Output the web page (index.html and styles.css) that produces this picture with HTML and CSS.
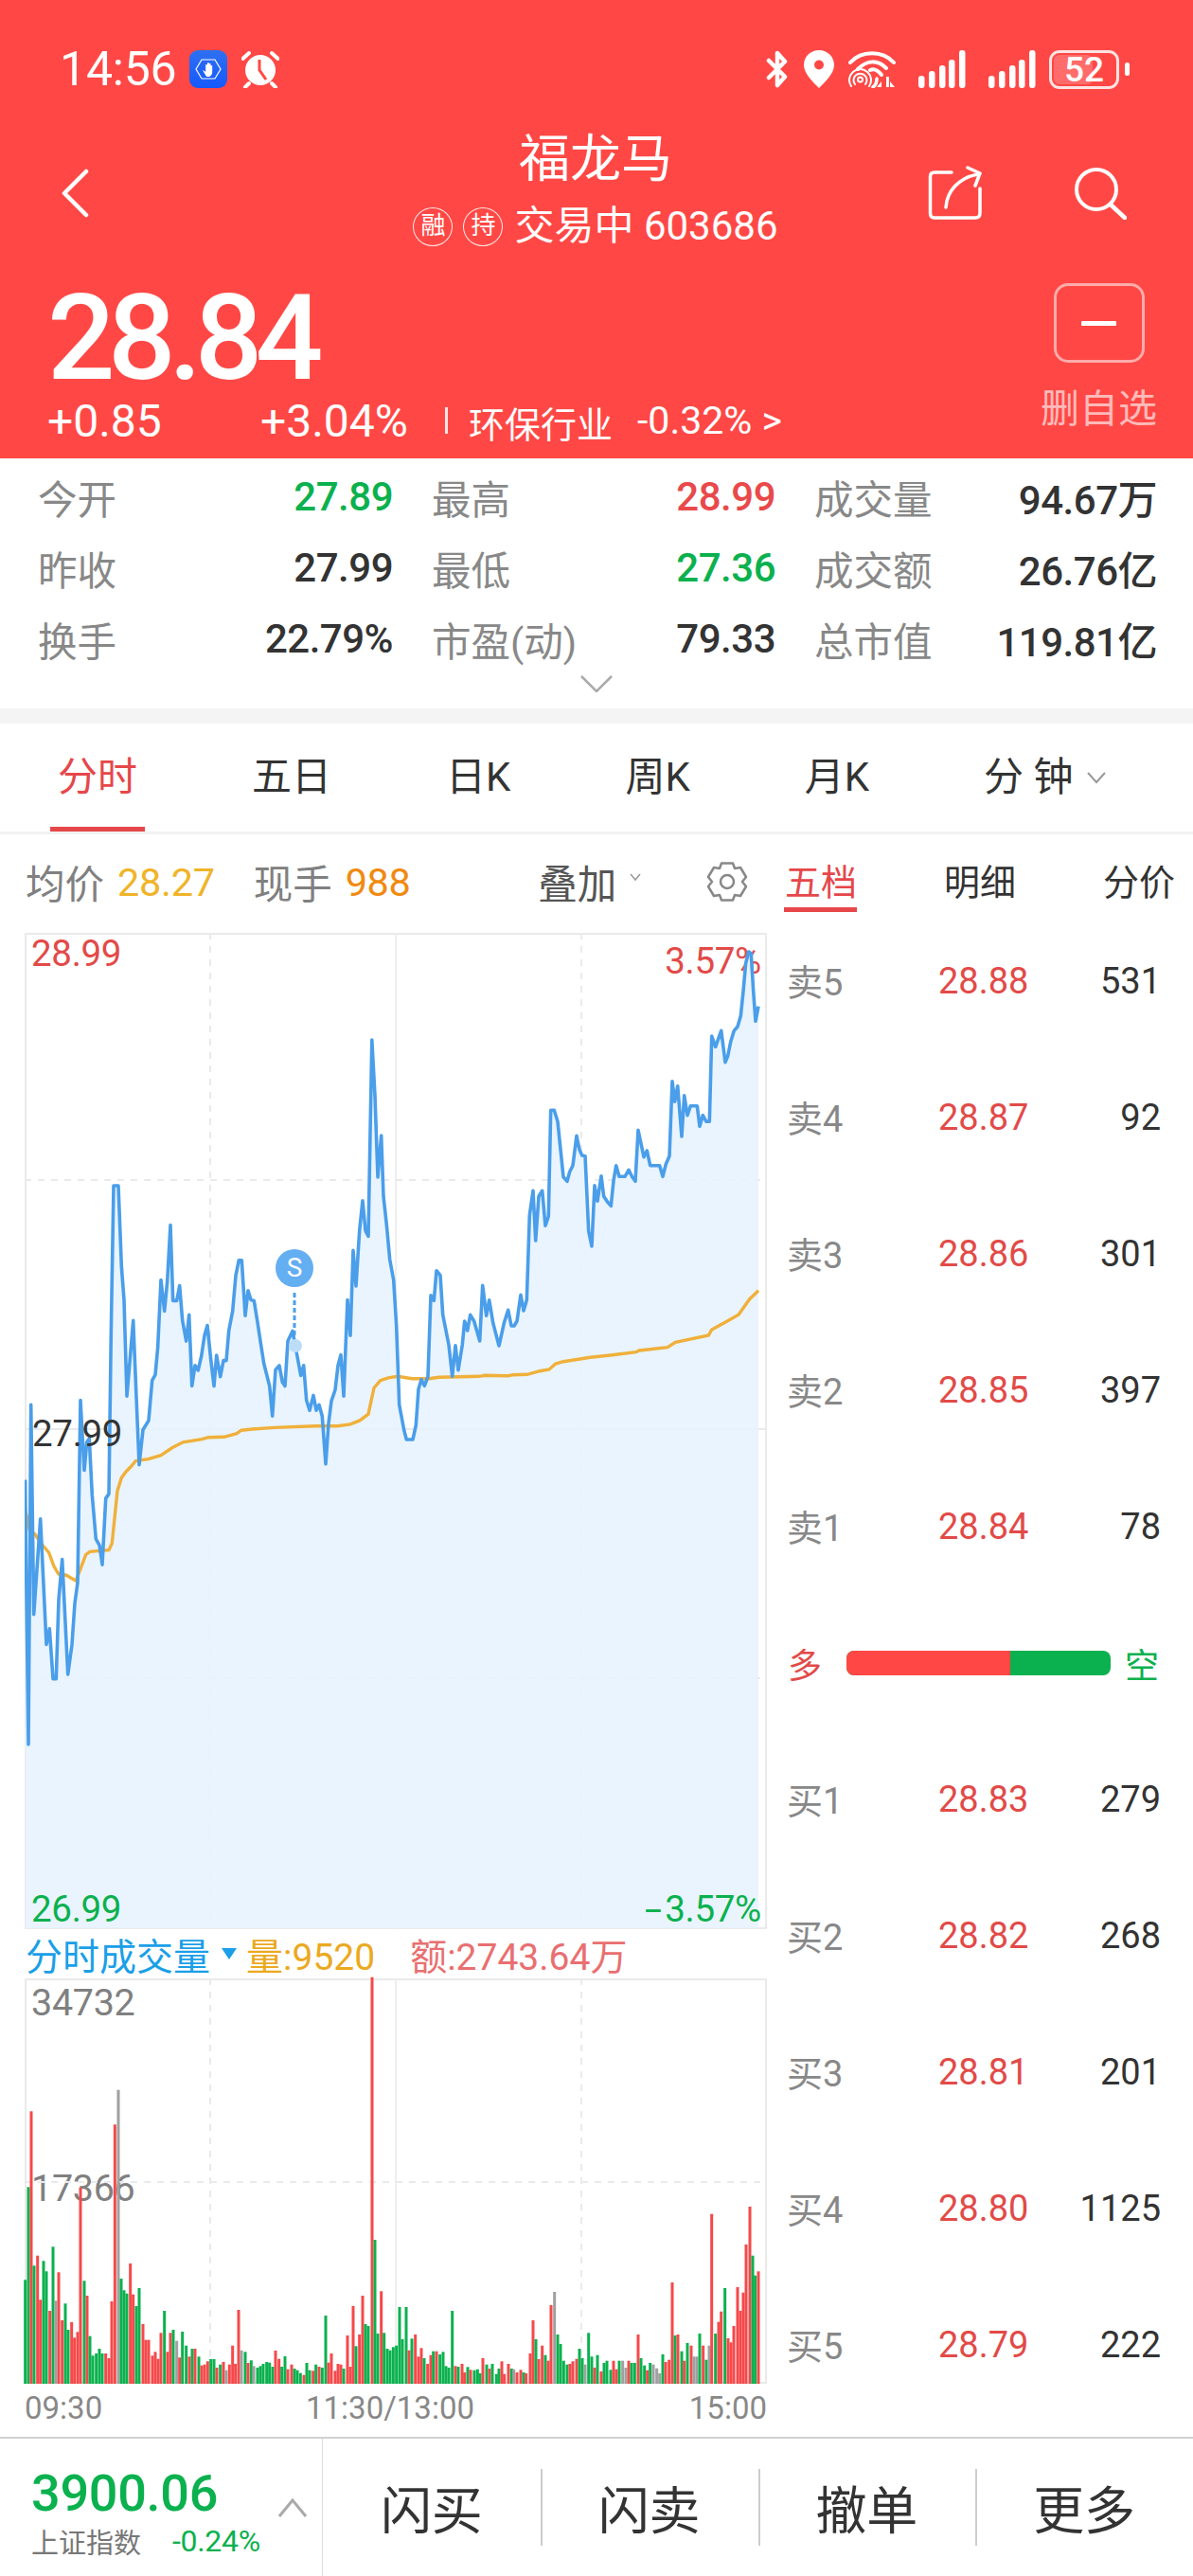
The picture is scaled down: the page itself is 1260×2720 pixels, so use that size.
FILE: index.html
```html
<!DOCTYPE html>
<html lang="zh-CN">
<head>
<meta charset="utf-8">
<title>福龙马</title>
<link rel="stylesheet" href="styles.css">
</head>
<body>
<div class="page">
  <header class="header">
    <div class="status">
      <div class="status-left">
        <span class="clock">14:56</span>
        <svg class="ico-app" viewBox="0 0 40 40"><defs><linearGradient id="ag" x1="0" y1="0" x2="0" y2="1"><stop offset="0" stop-color="#2f70f0"/><stop offset="1" stop-color="#1558ff"/></linearGradient></defs><rect width="40" height="40" rx="9" fill="url(#ag)"/><path d="M7 20 13 10H27L33 20 27 30H13Z" fill="none" stroke="#fff" stroke-width="1.2"/><path d="M14 21l2 1 1.200 1V15.500a1 1 0 0 1 1.800 0V13.500a1 1 0 0 1 1.800 0V14.500a1 1 0 0 1 1.800 0V16.500a1 1 0 0 1 1.600 0V23c0 3-2 5-4.500 5S17 26 16 24.500Z" fill="#fff"/></svg>
        <svg class="ico-alarm" viewBox="0 0 40 40"><circle cx="20" cy="21" r="16" fill="#fff"/><path d="M19 10V21L26 31" fill="none" stroke="#ff4845" stroke-width="3"/><path d="M1.500 9 8 3M38.500 9 32 3M8 35 4 39M32 35 36 39" stroke="#fff" stroke-width="4" stroke-linecap="round"/></svg>
      </div>
      <div class="status-right">
        <svg class="ico-bt" viewBox="0 0 24 40"><path d="M3 11 20 28 12 37V3L20 12 3 29" fill="none" stroke="#fff" stroke-width="4.500" stroke-linejoin="round" stroke-linecap="round"/></svg>
        <svg class="ico-pin" viewBox="0 0 32 40"><path fill-rule="evenodd" d="M16 0C7 0 0 7 0 15.500 0 25 10 34 16 40 22 34 32 25 32 15.500 32 7 25 0 16 0ZM16 10.500a5 5 0 1 1 0 10 5 5 0 0 1 0-10Z" fill="#fff"/></svg>
        <svg class="ico-wifi" viewBox="0 0 50 40"><g fill="none" stroke="#fff" stroke-linecap="round"><path d="M2 13C14 0 36 0 48 13" stroke-width="4"/><path d="M10 20C20 10 31 10 40 19" stroke-width="4"/><path d="M23 21C27 19 31 21 35 26" stroke-width="4"/><path d="M3 38A11.500 11.500 0 1 1 22 38" stroke-width="2"/><path d="M7 36A7 7 0 1 1 18 36" stroke-width="2"/><circle cx="12.500" cy="31" r="2.500" stroke-width="2"/><path d="M26 39C29 37 30 34 30 30" stroke-width="3.500"/></g><path d="M35 33v6h-5ZM40 28v11h3V28ZM44 33v6h5Z" fill="#fff"/></svg>
        <svg class="ico-signal" viewBox="0 0 50 40"><g fill="#fff"><rect x="0" y="27" width="6.500" height="13" rx="3"/><rect x="11" y="22" width="6.500" height="18" rx="3"/><rect x="22" y="16" width="6.500" height="24" rx="3"/><rect x="32" y="10" width="6.500" height="30" rx="3"/><rect x="43" y="0" width="6.500" height="40" rx="3"/></g></svg>
        <svg class="ico-signal" viewBox="0 0 50 40"><g fill="#fff"><rect x="0" y="27" width="6.500" height="13" rx="3"/><rect x="11" y="22" width="6.500" height="18" rx="3"/><rect x="22" y="16" width="6.500" height="24" rx="3"/><rect x="32" y="10" width="6.500" height="30" rx="3"/><rect x="43" y="0" width="6.500" height="40" rx="3"/></g></svg>
        <span class="battery"><span class="battery-fill"></span><span class="battery-num">52</span></span>
        <span class="battery-nub"></span>
      </div>
    </div>
    <div class="nav">
      <svg class="back" viewBox="0 0 30 52"><path d="M27 3 4 26 27 49" fill="none" stroke="#fff" stroke-width="4.500" stroke-linecap="round" stroke-linejoin="round"/></svg>
      <div class="nav-center">
        <div class="stock-name">福龙马</div>
        <div class="stock-sub">
          <span class="pill">融</span><span class="pill">持</span><span class="sub-text">交易中 603686</span>
        </div>
      </div>
      <div class="nav-actions">
        <svg class="share" viewBox="0 0 58 58"><path d="M25 7H7Q2.500 7 2.500 11.500V50Q2.500 55 7 55H50Q55 55 55 50V24" fill="none" stroke="#fff" stroke-width="3.500" stroke-linecap="round"/><path d="M19 44C20 28 31 13 53 9M42 2 55 8 50 21" fill="none" stroke="#fff" stroke-width="3.500" stroke-linecap="round" stroke-linejoin="round"/></svg>
        <svg class="search" viewBox="0 0 56 56"><circle cx="24" cy="24" r="21" fill="none" stroke="#fff" stroke-width="4"/><path d="M39 40 54 54" stroke="#fff" stroke-width="4.500" stroke-linecap="round"/></svg>
      </div>
    </div>
    <div class="quote">
      <div class="quote-main">
        <div class="price">28.84</div>
        <div class="quote-sub">
          <span class="chg">+0.85</span>
          <span class="pct">+3.04%</span>
          <span class="vbar"></span>
          <span class="sector">环保行业</span>
          <span class="sector-chg">-0.32% &gt;</span>
        </div>
      </div>
      <div class="watch">
        <span class="watch-box"><span class="watch-minus"></span></span>
        <span class="watch-label">删自选</span>
      </div>
    </div>
  </header>

  <section class="stats">
    <div class="stats-grid">
      <div class="stat"><span class="lab">今开</span><span class="val down">27.89</span></div>
      <div class="stat"><span class="lab">最高</span><span class="val up">28.99</span></div>
      <div class="stat"><span class="lab">成交量</span><span class="val">94.67万</span></div>
      <div class="stat"><span class="lab">昨收</span><span class="val">27.99</span></div>
      <div class="stat"><span class="lab">最低</span><span class="val down">27.36</span></div>
      <div class="stat"><span class="lab">成交额</span><span class="val">26.76亿</span></div>
      <div class="stat"><span class="lab">换手</span><span class="val">22.79%</span></div>
      <div class="stat"><span class="lab">市盈(动)</span><span class="val">79.33</span></div>
      <div class="stat"><span class="lab">总市值</span><span class="val">119.81亿</span></div>
    </div>
    <svg class="more" viewBox="0 0 34 18"><path d="M1 1 17 17 33 1" fill="none" stroke="#aaa" stroke-width="2.500"/></svg>
  </section>

  <nav class="tabs">
    <span class="tab active">分时</span>
    <span class="tab">五日</span>
    <span class="tab">日K</span>
    <span class="tab">周K</span>
    <span class="tab">月K</span>
    <span class="tab">分 钟<svg class="caret" viewBox="0 0 20 14"><path d="M1 2 10 12 19 2" fill="none" stroke="#999" stroke-width="2"/></svg></span>
  </nav>

  <main class="main">
    <div class="left">
      <div class="info">
        <span class="info-lab">均价</span><span class="info-avg">28.27</span>
        <span class="info-lab info-hand">现手</span><span class="info-now">988</span>
        <span class="overlay">叠加<svg class="mini" viewBox="0 0 12 10"><path d="M1 2 6 8 11 2" fill="none" stroke="#999" stroke-width="1.500"/></svg></span>
        <svg class="gear" viewBox="0 0 46 44"><path d="M17 2.500H29L31 8 37 7 43 17 39 22 43 27 37 37 31 36 29 41.500H17L15 36 9 37 3 27 7 22 3 17 9 7 15 8Z" fill="none" stroke="#888" stroke-width="2.500" stroke-linejoin="round"/><circle cx="23" cy="22" r="7" fill="none" stroke="#888" stroke-width="2.500"/></svg>
      </div>
      <div class="chart chart-price">
        <span class="clab clab-high">28.99</span>
        <span class="clab clab-high-pct">3.57%</span>
        <span class="clab clab-pre">27.99</span>
        <span class="clab clab-low">26.99</span>
        <span class="clab clab-low-pct"><span class="dash">-</span>3.57%</span>
        <svg id="priceSvg" class="plot" viewBox="26 985 784 1052"></svg>
        <span class="s-mark">S</span>
      </div>
      <div class="vol-head">
        <span class="vol-title">分时成交量</span><span class="vol-tri"></span>
        <span class="vol-q">量:9520</span><span class="vol-a">额:2743.64万</span>
      </div>
      <div class="chart chart-vol">
        <span class="clab vlab-top">34732</span>
        <span class="clab vlab-mid">17366</span>
        <svg id="volSvg" class="plot plot-vol" viewBox="26 2089 784 428"></svg>
      </div>
      <div class="axis"><span>09:30</span><span class="axis-mid">11:30/13:00</span><span>15:00</span></div>
    </div>
    <aside class="book">
      <div class="book-tabs"><span class="btab active">五档</span><span class="btab">明细</span><span class="btab">分价</span></div>
      <div class="row"><span class="r-lab">卖5</span><span class="r-price">28.88</span><span class="r-qty">531</span></div>
      <div class="row"><span class="r-lab">卖4</span><span class="r-price">28.87</span><span class="r-qty">92</span></div>
      <div class="row"><span class="r-lab">卖3</span><span class="r-price">28.86</span><span class="r-qty">301</span></div>
      <div class="row"><span class="r-lab">卖2</span><span class="r-price">28.85</span><span class="r-qty">397</span></div>
      <div class="row"><span class="r-lab">卖1</span><span class="r-price">28.84</span><span class="r-qty">78</span></div>
      <div class="balance">
        <span class="bal-bull">多</span>
        <span class="bal-bar"><span class="bal-red"></span></span>
        <span class="bal-bear">空</span>
      </div>
      <div class="row"><span class="r-lab">买1</span><span class="r-price">28.83</span><span class="r-qty">279</span></div>
      <div class="row"><span class="r-lab">买2</span><span class="r-price">28.82</span><span class="r-qty">268</span></div>
      <div class="row"><span class="r-lab">买3</span><span class="r-price">28.81</span><span class="r-qty">201</span></div>
      <div class="row"><span class="r-lab">买4</span><span class="r-price">28.80</span><span class="r-qty">1125</span></div>
      <div class="row"><span class="r-lab">买5</span><span class="r-price">28.79</span><span class="r-qty">222</span></div>
    </aside>
  </main>

  <footer class="footer">
    <div class="index">
      <div class="index-val">3900.06</div>
      <div class="index-sub"><span class="index-name">上证指数</span><span class="index-chg">-0.24%</span></div>
      <svg class="index-up" viewBox="0 0 30 20"><path d="M1 19 15 2 29 19" fill="none" stroke="#aaa" stroke-width="3"/></svg>
    </div>
    <div class="act"><span>闪买</span></div>
    <div class="act act-sep"><span>闪卖</span></div>
    <div class="act act-sep"><span>撤单</span></div>
    <div class="act act-sep"><span>更多</span></div>
  </footer>
</div>
<script src="chart.js"></script>
</body>
</html>
```
FILE: styles.css
```css
* { box-sizing: border-box; }
html, body { margin: 0; padding: 0; background: #fff; }
body { font-family: Roboto, "Noto Sans CJK SC", sans-serif; color: #333; }
.page { width: 1260px; height: 2720px; overflow: hidden; }

/* header */
.header { height: 484px; background: #ff4845; color: #fff; padding-top: 51px; }
.status { height: 44px; display: flex; justify-content: space-between; align-items: center; padding: 0 67px 0 63px; }
.status-left, .status-right { display: flex; align-items: center; }
.clock { font-size: 50px; line-height: 44px; width: 137px; letter-spacing: -.2px; }
.ico-app { width: 40px; height: 40px; }
.ico-alarm { width: 40px; height: 40px; margin-left: 15px; }
.ico-bt { width: 24px; height: 40px; }
.ico-pin { width: 32px; height: 40px; margin-left: 16px; }
.ico-wifi { width: 50px; height: 40px; margin-left: 15px; }
.ico-signal { width: 50px; height: 40px; margin-left: 24px; }
.battery { position: relative; width: 74px; height: 41px; margin-left: 14px; border: 3px solid rgba(255,255,255,.85); border-radius: 11px; overflow: hidden; display: flex; align-items: center; justify-content: center; }
.battery-fill { position: absolute; left: 2px; top: 2px; bottom: 2px; width: 60%; background: rgba(255,255,255,.2); border-radius: 6px; }
.battery-num { position: relative; font-size: 37px; line-height: 35px; font-weight: 500; color: #fff; }
.battery-nub { width: 5px; height: 14px; margin-left: 6px; background: #fff; border-radius: 3px; }

.nav { height: 128px; margin-top: 39px; display: grid; grid-template-columns: 1fr auto 1fr; align-items: center; padding: 0 70px 0 64px; }
.back { width: 30px; height: 52px; margin-top: 8px; }
.nav-center { display: flex; flex-direction: column; align-items: center; margin-left: 4px; align-self: start; margin-top: 3px; }
.stock-name { font-size: 54px; line-height: 64px; }
.stock-sub { display: flex; align-items: center; height: 52px; margin-top: 12px; }
.pill { width: 42px; height: 41px; border: 1.500px solid rgba(255,255,255,.9); border-radius: 50%; font-size: 26px; line-height: 37px; text-align: center; margin-right: 11px; }
.sub-text { font-size: 42px; line-height: 52px; margin-left: 1px; }
.nav-actions { display: flex; justify-content: flex-end; align-items: center; gap: 96px; margin-top: 8px; }
.share { width: 58px; height: 58px; }
.search { width: 56px; height: 56px; }

.quote { display: flex; justify-content: space-between; padding: 37px 38px 0 50px; }
.quote-main { display: flex; flex-direction: column; }
.price { font-size: 126px; line-height: 100px; font-weight: 500; letter-spacing: -7.500px; margin-top: 8px; }
.quote-sub { display: flex; align-items: center; height: 44px; margin-top: 15px; }
.chg { width: 225px; font-size: 48px; }
.pct { width: 195px; font-size: 48px; }
.vbar { width: 3px; height: 28px; background: rgba(255,255,255,.85); }
.sector { font-size: 38px; margin-left: 22px; margin-top: 2px; }
.sector-chg { font-size: 41px; margin-left: 26px; }
.watch { display: flex; flex-direction: column; align-items: center; }
.watch-box { width: 96px; height: 84px; border: 3px solid rgba(255,255,255,.55); border-radius: 15px; display: flex; align-items: center; justify-content: center; }
.watch-minus { width: 37px; height: 5px; background: #fff; border-radius: 1px; }
.watch-label { font-size: 41px; line-height: 48px; margin-top: 25px; width: 123px; color: rgba(255,255,255,.65); }

/* stats */
.stats { height: 280px; padding-top: 3px; border-bottom: 16px solid #f4f4f4; display: flex; flex-direction: column; align-items: center; }
.stats-grid { width: 100%; padding: 0 38px 0 40px; display: grid; grid-template-columns: 375px 363px 362px; column-gap: 41px; grid-auto-rows: 75px; }
.stat { display: flex; justify-content: space-between; align-items: center; }
.lab { font-size: 41.500px; color: #888; }
.val { font-size: 42px; font-weight: 500; color: #333; letter-spacing: -.5px; }
.up { color: #e9494a; }
.down { color: #0bb14e; }
.more { width: 34px; height: 18px; margin-top: 1px; }

/* tabs */
.tabs { height: 117px; border-bottom: 3px solid #f2f2f2; display: flex; gap: 121px; padding-left: 61px; align-items: stretch; }
.tab { position: relative; font-size: 42px; line-height: 116px; display: flex; align-items: center; color: #333; }
.tab.active { color: #e6474a; }
.tab.active::after { content: ""; position: absolute; left: -8px; right: -8px; bottom: 0; height: 5px; background: #e6474a; }
.caret { width: 20px; height: 14px; margin-left: 14px; }

/* main */
.main { display: flex; height: 1692px; }
.left { width: 820px; }
.info { height: 104px; padding: 0 0 4px 27px; display: flex; align-items: center; font-size: 41.500px; color: #888; }
.info-lab { color: #808080; }
.info-avg { color: #f0b429; margin-left: 14px; letter-spacing: -.3px; }
.info-hand { margin-left: 41px; }
.info-now { color: #f08a10; margin-left: 14px; letter-spacing: -.5px; }
.overlay { margin-left: 135px; color: #555; display: flex; align-items: center; }
.mini { width: 12px; height: 10px; margin-left: 14px; margin-top: -10px; }
.gear { width: 46px; height: 44px; margin-left: 68px; }

.chart { position: relative; margin-left: 26px; width: 784px; }
.chart-price { height: 1052px; }
.chart-vol { height: 428px; }
.plot { position: relative; display: block; width: 100%; height: 100%; }
.plot-vol { overflow: visible; }
.clab { position: absolute; font-size: 38.500px; line-height: 40px; letter-spacing: -.3px; }
.clab-high { left: 7px; top: 2px; color: #e24a48; }
.clab-high-pct { right: 6px; top: 10px; color: #e24a48; }
.clab-pre { left: 8px; top: 509px; color: #333; z-index: 2; }
.clab-low { left: 7px; top: 1011px; color: #0bb14e; z-index: 2; }
.clab-low-pct { right: 6px; top: 1011px; color: #0bb14e; z-index: 2; }
.dash { display: inline-block; width: 21px; transform: scaleX(1.7); transform-origin: left center; }
.vlab-top { left: 7px; top: 6px; color: #808080; font-size: 39.500px; }
.vlab-mid { left: 7px; top: 202px; color: #808080; font-size: 39.500px; }
.s-mark { position: absolute; left: 265px; top: 334px; width: 40px; height: 40px; border-radius: 50%; background: #64aef2; color: #fff; font-size: 28px; line-height: 40px; text-align: center; }

.vol-head { height: 52px; padding-left: 27px; display: flex; align-items: center; font-size: 39px; }
.vol-title { color: #1a9fe8; }
.vol-tri { width: 0; height: 0; margin-left: 12px; margin-right: 10px; border-left: 8px solid transparent; border-right: 8px solid transparent; border-top: 12px solid #1a9fe8; }
.vol-q { color: #eba91f; }
.vol-a { color: #e96f70; margin-left: 37px; }
.axis { width: 784px; margin-left: 26px; display: flex; justify-content: space-between; font-size: 33px; line-height: 40px; color: #888; padding-top: 6px; }
.axis-mid { margin-right: 12px; }

/* book */
.book { width: 440px; }
.book-tabs { height: 83px; display: grid; grid-template-columns: 168px 168px 1fr; padding-left: 9px; font-size: 38px; }
.btab { height: 82px; padding-top: 29px; line-height: 44px; color: #333; }
.btab.active { color: #e6474a; position: relative; }
.btab.active::after { content: ""; position: absolute; left: -1px; width: 77px; top: 77px; height: 5px; background: #e6474a; }
.row { height: 144px; display: grid; grid-template-columns: 160px 1fr auto; align-items: center; padding: 0 34px 0 11px; }
.r-lab { font-size: 38px; color: #888; margin-top: -4px; }
.r-price { font-size: 38px; color: #e24a48; }
.r-qty { font-size: 38px; color: #333; }
.balance { height: 144px; display: flex; align-items: center; padding: 0 36px 0 12px; }
.bal-bull { font-size: 36px; color: #e24a48; width: 62px; }
.bal-bear { font-size: 36px; color: #0bb14e; margin-left: 15px; }
.bal-bar { width: 281px; height: 26px; border-radius: 8px; background: #0bb14e; overflow: hidden; display: block; }
.bal-red { display: block; width: 62%; height: 100%; background: #ff4845; }

/* footer */
.footer { height: 147px; border-top: 2px solid #d0d0d0; display: flex; }
.index { position: relative; width: 341px; border-right: 1px solid #ddd; padding: 26px 0 0 33px; }
.index-val { font-size: 54px; line-height: 64px; font-weight: 500; color: #0bb14e; letter-spacing: -.3px; }
.index-sub { display: flex; align-items: center; margin-top: -3px; }
.index-name { font-size: 29px; color: #777; width: 149px; }
.index-chg { font-size: 32px; color: #0bb14e; letter-spacing: -.3px; }
.index-up { position: absolute; left: 294px; top: 63px; width: 30px; height: 20px; }
.act { flex: 1; display: flex; align-items: center; justify-content: center; font-size: 54px; color: #333; position: relative; }
.act-sep::before { content: ""; position: absolute; left: 0; top: 32px; height: 81px; width: 2px; background: #ccc; }
```
FILE: chart.js
```js
var NS = 'http://www.w3.org/2000/svg';
function el(parent, name, attrs) {
  var n = document.createElementNS(NS, name);
  for (var k in attrs) n.setAttribute(k, attrs[k]);
  parent.appendChild(n);
  return n;
}
function pts(raw, fx, fy) {
  var out = [];
  for (var i = 0; i < raw.length; i += 2) out.push([fx(raw[i]), fy(raw[i + 1])]);
  return out;
}
var fxA = function (x) { return x / 3; };
var fyA = function (y) { return 1250 + y / 2.529; };
var fxB = function (x) { return 400 + x / 3; };
var fyB = function (y) { return 1000 + y / 3; };

var priceA = [80,790,82,960,90,1497,98,590,107,1150,128,895,147,1230,157,1188,168,1322,178,1322,186,1110,197,1003,215,1310,228,1230,237,1120,246,1065,255,578,267,765,275,690,283,680,292,830,304,948,315,965,324,1017,335,840,345,828,352,400,360,5,375,5,385,220,393,310,402,567,422,365,432,570,441,750,453,657,471,632,482,525,492,510,500,435,510,257,521,340,530,260,540,110,548,312,560,312,569,272,578,365,590,420,599,350,608,540,618,485,628,498,638,460,648,405,657,378,668,470,678,540,686,458,698,515,708,472,717,472,725,392,737,340,747,245,757,204,766,204,777,352,786,285,795,310,805,312,816,370,826,425,836,480,854,540,863,620,873,497,885,485,895,530,903,540,912,420,927,393,935,430,953,512,962,485,971,578,981,605,993,565,1002,605,1011,590,1021,620,1032,748,1041,640,1050,580,1062,550,1071,485,1080,457,1089,567,1101,310,1110,405,1119,178,1128,273,1139,125,1149,45,1158,125,1167,140];
var priceMid = [[392.8,1098],[396,1157],[399,1243],[402.7,1199]];
var priceB = [15,790,25,880,35,990,47,1055,56,1200,65,1450,80,1530,88,1560,108,1560,118,1515,126,1400,135,1370,145,1390,156,1360,165,1103,175,1120,183,1025,195,1040,203,1165,222,1260,233,1360,243,1262,252,1340,265,1260,272,1185,281,1215,290,1165,302,1185,320,1248,329,1072,341,1168,350,1118,362,1190,381,1263,398,1187,410,1150,420,1200,429,1200,438,1185,450,1102,459,1152,469,1118,478,850,489,772,497,930,507,790,518,772,528,883,538,853,545,517,556,517,567,553,585,728,597,742,605,712,615,692,627,598,636,642,644,660,654,662,665,900,675,948,684,755,693,805,705,725,713,790,725,808,736,820,744,740,752,692,762,727,780,727,792,706,803,728,813,742,822,580,840,665,850,645,860,692,890,692,900,727,910,688,921,662,930,425,938,490,947,440,960,600,968,470,978,533,988,503,1009,503,1017,568,1027,533,1038,553,1048,553,1055,282,1067,316,1085,265,1098,365,1106,345,1115,300,1126,265,1137,252,1147,218,1155,140,1163,50,1172,15,1180,20,1187,140,1194,235,1203,188];
var avgA = [80,870,95,930,110,935,130,960,155,985,170,1020,185,1042,210,1045,240,1060,250,1040,272,990,285,982,345,978,355,960,372,820,385,785,400,768,415,755,430,740,470,735,510,725,545,705,580,690,640,682,660,677,710,676,750,667,765,658,800,655,870,651,1000,647,1070,647,1110,642,1140,632,1167,615,1185,545,1205,525,1230,518];
var avgB = [60,1360,105,1367,160,1367,190,1363,320,1360,335,1357,410,1358,425,1355,470,1354,510,1343,540,1338,560,1320,585,1313,670,1300,740,1292,815,1283,825,1278,915,1268,940,1252,1045,1230,1055,1212,1095,1190,1140,1165,1175,1115,1203,1088];

var price = pts(priceA, fxA, fyA).concat(priceMid, pts(priceB, fxB, fyB));
var avg = pts(avgA, fxA, fyA).concat(pts(avgB, fxB, fyB));
function str(list) { return list.map(function (p) { return p[0].toFixed(1) + ',' + p[1].toFixed(1); }).join(' '); }

var GRID = '#eaeaea';
function gridFor(svg, top, bottom, hLines) {
  el(svg, 'rect', { x: 27, y: top + 1, width: 782, height: bottom - top - 2, fill: 'none', stroke: GRID, 'stroke-width': 2 });
  [222, 614].forEach(function (x) {
    el(svg, 'line', { x1: x, x2: x, y1: top, y2: bottom, stroke: GRID, 'stroke-width': 2, 'stroke-dasharray': '7 7' });
  });
  el(svg, 'line', { x1: 418, x2: 418, y1: top, y2: bottom, stroke: '#eeeeee', 'stroke-width': 2 });
  hLines.forEach(function (l) {
    el(svg, 'line', { x1: 26, x2: 810, y1: l[0], y2: l[0], stroke: GRID, 'stroke-width': 2, 'stroke-dasharray': l[1] ? '7 7' : 'none' });
  });
}

var ps = document.getElementById('priceSvg');
gridFor(ps, 985, 2037, [[1246, true], [1509, false], [1772, true]]);
el(ps, 'polygon', { points: '27,2036 ' + str(price) + ' 801,2036', fill: '#e7f3fe', 'fill-opacity': 0.9 });
el(ps, 'polyline', { points: str(avg), fill: 'none', stroke: '#f0b03a', 'stroke-width': 3.4 });
el(ps, 'polyline', { points: str(price), fill: 'none', stroke: '#4a9eea', 'stroke-width': 3.6, 'stroke-linejoin': 'round' });
el(ps, 'line', { x1: 311, x2: 311, y1: 1365, y2: 1412, stroke: '#4a9eea', 'stroke-width': 3, 'stroke-dasharray': '5 3' });
el(ps, 'circle', { cx: 312, cy: 1421, r: 7, fill: '#bddcf8' });

var volA = [80,'g',622,90,'g',328,99,'r',88,108,'g',577,119,'r',545,128,'r',685,138,'g',562,147,'g',595,158,'r',720,168,'g',517,177,'a',688,186,'r',598,197,'r',750,207,'g',697,216,'g',780,227,'r',756,236,'r',805,246,'r',787,255,'r',330,267,'g',625,276,'r',672,285,'g',800,294,'g',862,305,'g',855,315,'g',840,324,'g',855,335,'r',855,345,'r',870,354,'r',690,364,'r',130,375,'a',20,384,'g',618,393,'g',655,402,'g',665,413,'r',570,422,'r',668,432,'g',705,441,'g',648,453,'r',762,462,'r',812,471,'r',812,483,'r',862,492,'r',850,501,'r',872,510,'r',790,521,'g',720,531,'r',850,540,'r',790,549,'g',780,560,'a',815,569,'r',868,578,'g',786,590,'g',830,600,'r',865,609,'g',840,618,'r',840,630,'g',865,639,'r',893,648,'r',890,658,'r',880,668,'g',873,678,'g',873,687,'r',900,698,'g',890,708,'r',882,717,'a',908,727,'r',890,737,'r',830,746,'r',888,756,'r',717,765,'a',845,777,'g',850,786,'r',885,796,'g',877,804,'a',895,816,'g',900,825,'g',895,834,'g',888,845,'g',882,854,'g',884,864,'g',897,873,'r',846,884,'r',872,893,'g',897,903,'g',864,912,'r',905,924,'r',890,933,'g',903,942,'g',908,952,'g',917,963,'r',923,972,'g',885,981,'g',908,992,'r',910,1001,'g',890,1011,'r',897,1021,'g',900,1032,'g',735,1041,'r',884,1050,'r',855,1062,'r',910,1071,'r',888,1080,'r',890,1089,'g',903,1101,'r',798,1110,'r',897,1119,'r',705,1128,'g',832,1139,'r',795,1149,'r',672,1158,'g',762,1167,'g',768,1179,'r',-337,1188,'g',495,1197,'g',792];
var volB = [8,'r',658,17,'g',790,27,'g',840,36,'g',845,46,'g',835,56,'g',830,66,'g',708,75,'g',810,87,'g',708,96,'r',845,105,'g',808,116,'r',795,126,'r',865,135,'r',838,144,'g',870,155,'r',888,165,'r',860,173,'g',848,183,'r',848,194,'g',858,204,'g',850,213,'g',895,222,'g',900,233,'g',720,243,'r',895,252,'g',897,264,'r',888,272,'r',915,282,'g',898,291,'r',907,303,'g',908,313,'g',905,321,'g',918,330,'r',870,342,'g',890,351,'r',903,360,'g',888,373,'g',920,381,'g',903,390,'r',880,398,'r',920,411,'r',888,421,'g',903,428,'a',905,438,'r',915,450,'r',907,459,'g',915,467,'r',918,480,'r',855,489,'r',750,498,'g',810,507,'r',873,518,'r',830,528,'g',860,537,'r',878,546,'r',702,557,'a',660,567,'g',795,576,'g',825,586,'g',878,597,'g',890,606,'r',888,615,'r',880,627,'r',872,636,'g',840,645,'g',870,654,'a',890,665,'g',790,675,'g',865,684,'r',900,693,'g',860,705,'r',912,714,'g',885,723,'g',878,735,'g',907,744,'r',878,753,'r',905,762,'g',878,773,'a',878,783,'a',900,792,'r',878,801,'g',885,811,'g',885,822,'r',795,831,'g',870,842,'g',893,851,'r',908,860,'g',885,870,'a',890,881,'a',902,890,'a',918,900,'g',858,909,'r',882,920,'r',875,930,'r',630,939,'g',798,948,'r',795,960,'g',848,968,'r',878,978,'g',822,990,'r',830,999,'a',865,1008,'a',865,1017,'g',792,1028,'r',830,1038,'g',875,1047,'a',830,1055,'r',413,1067,'g',792,1077,'r',755,1085,'r',722,1097,'g',648,1107,'r',807,1116,'r',820,1125,'r',768,1137,'r',645,1146,'r',720,1155,'r',662,1164,'r',510,1176,'r',390,1185,'g',545,1193,'g',608,1203,'r',595];
var COLORS = { r: '#f5494a', g: '#0bb14e', a: '#a0a0a0' };

var vs = document.getElementById('volSvg');
gridFor(vs, 2089, 2517, [[2304, true]]);
function bars(list, fx) {
  for (var i = 0; i < list.length; i += 3) {
    var top = 2200 + list[i + 2] / 3;
    el(vs, 'rect', { x: (fx(list[i]) - 1.5).toFixed(2), y: top.toFixed(1), width: 3, height: (2517 - top).toFixed(1), fill: COLORS[list[i + 1]] });
  }
}
bars(volA, fxA);
bars(volB, fxB);
```
